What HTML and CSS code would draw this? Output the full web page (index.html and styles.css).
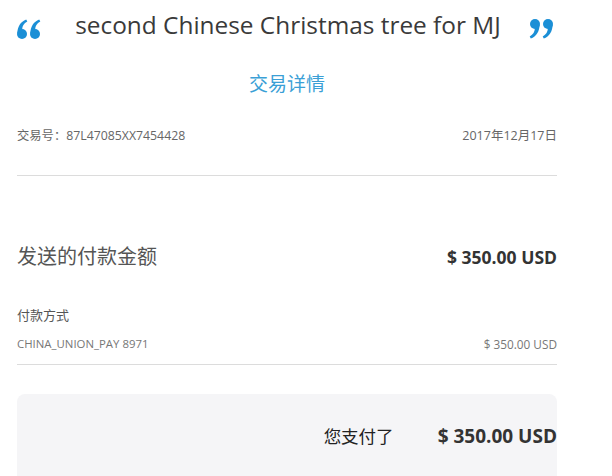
FILE: index.html
```html
<!DOCTYPE html>
<html lang="zh">
<head>
<meta charset="utf-8">
<link rel="stylesheet" href="styles.css">
</head>
<body>
<div class="page">
  <div class="header">
    <svg class="quote" viewBox="0 0 24 20" width="24" height="20" aria-hidden="true">
      <g fill="#1b8fd6">
        <path d="M0.4,14.5 C0.4,7.5 3.6,2.6 9.2,0.4 L10.3,2.6 C6.8,4.4 5.2,7.2 5.2,10.5 Z"/>
        <circle cx="5" cy="15" r="5"/>
        <path d="M13.4,14.5 C13.4,7.5 16.6,2.6 22.2,0.4 L23.3,2.6 C19.8,4.4 18.2,7.2 18.2,10.5 Z"/>
        <circle cx="18" cy="15" r="5"/>
      </g>
    </svg>
    <span class="title">second Chinese Christmas tree for MJ</span>
    <svg class="quote close" viewBox="0 0 24 20" width="24" height="20" aria-hidden="true">
      <g fill="#1b8fd6" transform="rotate(180 12 10)">
        <path d="M0.4,14.5 C0.4,7.5 3.6,2.6 9.2,0.4 L10.3,2.6 C6.8,4.4 5.2,7.2 5.2,10.5 Z"/>
        <circle cx="5" cy="15" r="5"/>
        <path d="M13.4,14.5 C13.4,7.5 16.6,2.6 22.2,0.4 L23.3,2.6 C19.8,4.4 18.2,7.2 18.2,10.5 Z"/>
        <circle cx="18" cy="15" r="5"/>
      </g>
    </svg>
  </div>
  <div class="subtitle">交易详情</div>
  <div class="row meta">
    <span class="tx">交易号：87L47085XX7454428</span>
    <span class="date">2017年12月17日</span>
  </div>
  <div class="divider first"></div>
  <div class="row sent">
    <span class="sent-label">发送的付款金额</span>
    <span class="sent-amount">$ 350.00 USD</span>
  </div>
  <div class="method-label">付款方式</div>
  <div class="row method">
    <span class="card">CHINA_UNION_PAY 8971</span>
    <span class="card-amount">$ 350.00 USD</span>
  </div>
  <div class="divider"></div>
  <div class="total-box">
    <span class="total-label">您支付了</span>
    <span class="total-amount">$ 350.00 USD</span>
  </div>
</div>
</body>
</html>
```

FILE: styles.css
```css
html, body {
  margin: 0;
  padding: 0;
  background: #ffffff;
}
body {
  font-family: "Open Sans", "Noto Sans CJK SC", sans-serif;
  color: #333;
  height: 476px;
  overflow: hidden;
}
.page {
  width: 540px;
  margin-left: 17px;
}
.header {
  display: flex;
  justify-content: space-between;
  align-items: flex-start;
  height: 50px;
}
.quote {
  display: block;
  margin-top: 19px;
}
.quote.close {
  margin-top: 19px;
  margin-right: 4px;
}
.title {
  font-size: 24.4px;
  line-height: 1;
  color: #3a3a3a;
  margin-top: 13px;
  margin-left: 6px;
}
.subtitle {
  text-align: center;
  font-size: 19px;
  line-height: 24px;
  color: #3b9fd6;
  margin-top: 22px;
}
.row {
  display: flex;
  justify-content: space-between;
  align-items: center;
}
.meta {
  color: #666;
  margin-top: 32px;
  line-height: 16px;
}
.tx {
  font-size: 12.3px;
}
.date {
  font-size: 12.5px;
}
.divider {
  height: 1px;
  background: #dcdcdc;
}
.divider.first {
  margin-top: 31px;
}
.sent {
  margin-top: 68px;
}
.sent-label {
  font-size: 20px;
  color: #555;
  line-height: 26px;
}
.sent-amount {
  font-size: 17.5px;
  font-weight: 700;
  color: #333;
}
.method-label {
  font-size: 13px;
  color: #555;
  margin-top: 37px;
  line-height: 16px;
}
.method {
  color: #777;
  margin-top: 13px;
  line-height: 16px;
  margin-bottom: 12px;
}
.card {
  font-size: 11.4px;
}
.card-amount {
  font-size: 11.8px;
}
.total-box {
  margin-top: 29px;
  height: 90px;
  background: #f5f5f7;
  border-radius: 8px 8px 0 0;
  display: flex;
  justify-content: flex-end;
  align-items: flex-start;
  gap: 44px;
  padding-top: 30px;
  box-sizing: border-box;
}
.total-label {
  font-size: 17.5px;
  color: #222;
  line-height: 24px;
}
.total-amount {
  font-size: 19px;
  font-weight: 700;
  color: #333;
  line-height: 24px;
}
```
